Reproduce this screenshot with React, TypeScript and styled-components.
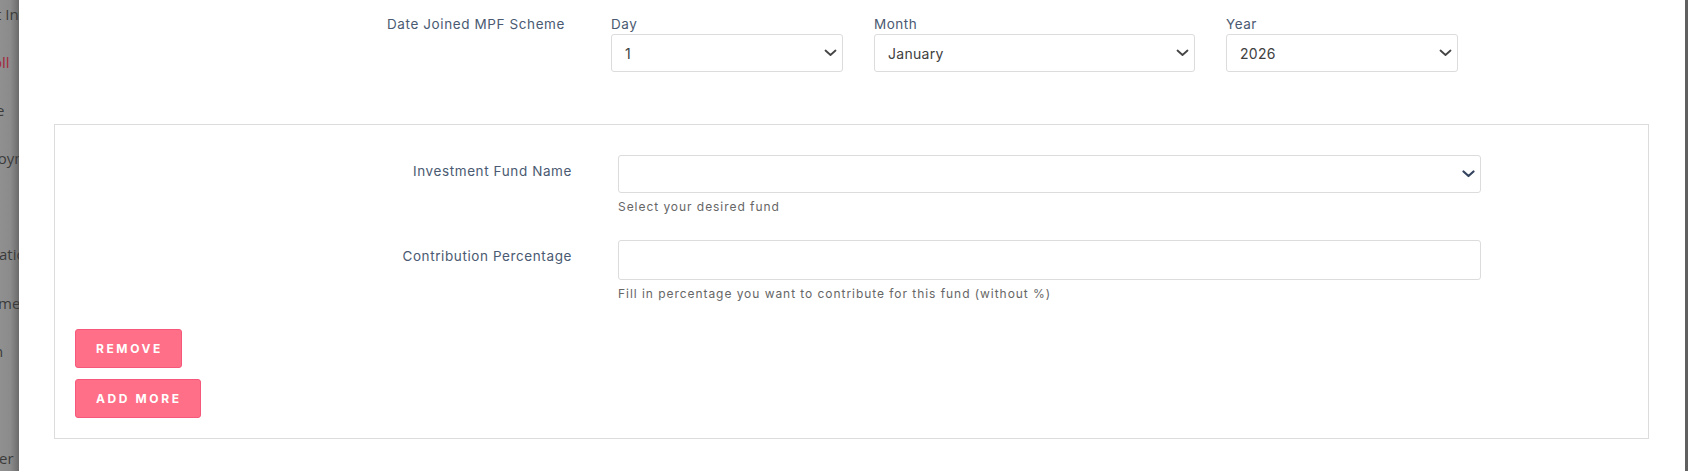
import styled, { createGlobalStyle } from "styled-components"

const GlobalStyle = createGlobalStyle`
    * { box-sizing: border-box; }
    html, body { margin: 0; padding: 0; }
    body {
        font-family: Inter, "Noto Sans", "Open Sans", sans-serif;
        background: #ffffff;
    }
`

const Page = styled.div`
    display: flex;
    width: 100%;
    height: 471px;
    overflow: hidden;
`

const Backdrop = styled.div`
    width: 19px;
    flex-shrink: 0;
    overflow: hidden;
    background: linear-gradient(to right, #909090 0%, #8b8b8b 55%, #767676 85%, #6a6a6a 100%);
    display: flex;
    flex-direction: column;
    padding-top: 4px;
`

const MenuLine = styled.div<{ $shift: number; $top: number; $red?: boolean }>`
    height: 20px;
    line-height: 20px;
    margin-top: ${p => p.$top}px;
    margin-left: ${p => p.$shift}px;
    white-space: nowrap;
    font-family: "Open Sans", "Noto Sans", sans-serif;
    font-size: 15px;
    color: ${p => (p.$red ? "#a3283b" : "#3b3b3b")};
`

const Edge = styled.div`
    width: 3px;
    flex-shrink: 0;
    background: #606060;
`

const Modal = styled.div`
    flex: 1;
    background: #ffffff;
    padding: 16px 36px 0 35px;
`

const DateRow = styled.div`
    display: grid;
    grid-template-columns: 526px 232px 321px 232px;
    column-gap: 31px;
`

const RowLabel = styled.div`
    font-size: 13.5px;
    line-height: 16px;
    letter-spacing: 0.6px;
    color: #4a5a72;
    text-align: right;
    padding-right: 15px;
`

const DateField = styled.div`
    display: flex;
    flex-direction: column;
    gap: 2px;
`

const SmallLabel = styled.div`
    font-size: 13.5px;
    line-height: 16px;
    letter-spacing: 0.5px;
    color: #4a5a72;
`

const SelectBox = styled.div`
    position: relative;
    height: 38px;
    border: 1px solid #dcdcdc;
    border-radius: 3px;
    background: #fff;
    display: flex;
    align-items: center;
    padding: 0 28px 0 13px;
    font-size: 14px;
    letter-spacing: 0.3px;
    color: #404040;
`

const Chevron = styled.svg`
    position: absolute;
    right: 5px;
    top: 50%;
    transform: translateY(-50%);
`

const FundBox = styled.div`
    margin-top: 52px;
    border: 1px solid #dcdcdc;
    padding: 30px 20px 20px 20px;
`

const FieldRow = styled.div<{ $gapAfter: number }>`
    display: grid;
    grid-template-columns: 497px 863px;
    column-gap: 46px;
    margin-bottom: ${p => p.$gapAfter}px;
`

const FieldLabel = styled.div`
    font-size: 13.5px;
    line-height: 16px;
    letter-spacing: 0.6px;
    color: #4a5a72;
    text-align: right;
    padding-top: 8px;
`

const FieldCol = styled.div`
    display: flex;
    flex-direction: column;
`

const TextInput = styled.div`
    height: 40px;
    border: 1px solid #dcdcdc;
    border-radius: 3px;
    background: #fff;
`

const Help = styled.div`
    margin-top: 6px;
    font-size: 12px;
    line-height: 16px;
    letter-spacing: 0.95px;
    color: #666666;
`

const Buttons = styled.div`
    display: flex;
    flex-direction: column;
    align-items: flex-start;
    gap: 11px;
`

const PinkButton = styled.button`
    height: 39px;
    padding: 0 18px 0 20px;
    border: 1px solid #f5587a;
    border-radius: 3px;
    background: #ff6f87;
    color: #ffffff;
    font-family: Inter, "Noto Sans", sans-serif;
    font-size: 12px;
    font-weight: 700;
    letter-spacing: 2.6px;
    cursor: pointer;
`

function Caret({ color, width = 1.8 }: { color: string; width?: number }) {
    return (
        <Chevron width="13" height="8" viewBox="0 0 13 8">
            <path d="M1.5 1.5 L6.5 6 L11.5 1.5" fill="none" stroke={color} strokeWidth={width} strokeLinecap="round" strokeLinejoin="round" />
        </Chevron>
    )
}

const menu = [
    { text: "t Inf", shift: -4, top: 0 },
    { text: "Payroll", shift: -38, top: 28, red: true },
    { text: "e", shift: -4, top: 28 },
    { text: "loyment", shift: -6, top: 28 },
    { text: "ation", shift: -1, top: 76 },
    { text: "ment", shift: -2, top: 29 },
    { text: "n", shift: -6, top: 28 },
    { text: "er", shift: -1, top: 87 },
]

export default function App() {
    return (
        <>
            <GlobalStyle />
            <Page>
                <Backdrop>
                    {menu.map((m, i) => (
                        <MenuLine key={i} $shift={m.shift} $top={m.top} $red={m.red}>
                            {m.text}
                        </MenuLine>
                    ))}
                </Backdrop>

                <Modal>
                    <DateRow>
                        <RowLabel>Date Joined MPF Scheme</RowLabel>
                        <DateField>
                            <SmallLabel>Day</SmallLabel>
                            <SelectBox>
                                1
                                <Caret color="#454545" />
                            </SelectBox>
                        </DateField>
                        <DateField>
                            <SmallLabel>Month</SmallLabel>
                            <SelectBox>
                                January
                                <Caret color="#454545" />
                            </SelectBox>
                        </DateField>
                        <DateField>
                            <SmallLabel>Year</SmallLabel>
                            <SelectBox>
                                2026
                                <Caret color="#454545" />
                            </SelectBox>
                        </DateField>
                    </DateRow>

                    <FundBox>
                        <FieldRow $gapAfter={25}>
                            <FieldLabel>Investment Fund Name</FieldLabel>
                            <FieldCol>
                                <SelectBox>
                                    <Caret color="#34445e" width={2.2} />
                                </SelectBox>
                                <Help>Select your desired fund</Help>
                            </FieldCol>
                        </FieldRow>
                        <FieldRow $gapAfter={27}>
                            <FieldLabel>Contribution Percentage</FieldLabel>
                            <FieldCol>
                                <TextInput />
                                <Help>Fill in percentage you want to contribute for this fund (without %)</Help>
                            </FieldCol>
                        </FieldRow>
                        <Buttons>
                            <PinkButton>REMOVE</PinkButton>
                            <PinkButton>ADD MORE</PinkButton>
                        </Buttons>
                    </FundBox>
                </Modal>
                <Edge />
            </Page>
        </>
    )
}
